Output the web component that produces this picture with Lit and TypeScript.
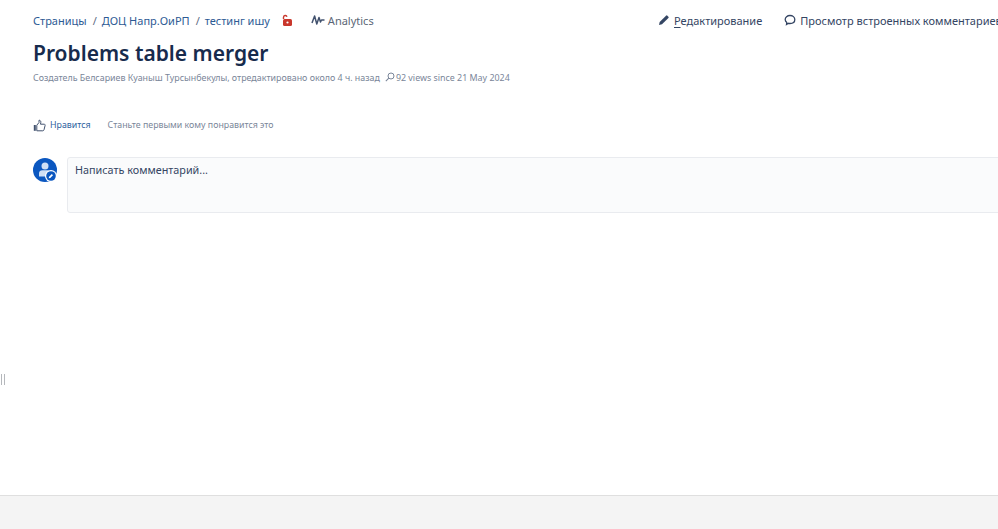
import { LitElement, html, css } from "lit";
import { customElement } from "lit/decorators.js";

@customElement("app-root")
export class AppRoot extends LitElement {
  static styles = css`
    :host {
      display: flex;
      flex-direction: column;
      position: relative;
      width: 998px;
      height: 529px;
      overflow: hidden;
      background: #fff;
      font-family: "Noto Sans", "Open Sans", "Liberation Sans", sans-serif;
      color: #172b4d;
    }
    main { flex: 1; padding: 0 0 0 33px; min-height: 0; }
    .top {
      display: grid;
      grid-template-columns: 625px 1fr;
      height: 40px;
      margin-bottom: 1px;
      align-items: center;
      white-space: nowrap;
      font-size: 11px;
    }
    .left, .right { display: flex; align-items: center; }
    .crumb { color: #2d5a94; }
    .sep { color: #5e6c84; margin: 0 5px 0 6px; }
    .lock { margin: 0 0 0 11px; display: block; }
    .analytics { display: flex; align-items: center; gap: 3px; margin-left: 18px; color: #5b6676; }
    .action { display: flex; align-items: center; gap: 4px; color: #344563; }
    .action + .action { margin-left: 22px; }
    u { text-underline-offset: 2px; text-decoration-thickness: 1px; }
    h1 {
      margin: 0;
      font-size: 21px;
      line-height: 24px;
      font-weight: 600;
      color: #172b4d;
      white-space: nowrap;
    }
    .meta {
      display: flex;
      align-items: center;
      margin-top: 6px;
      height: 12px;
      font-size: 8.9px;
      color: #7a8699;
      white-space: nowrap;
    }
    .views { display: flex; align-items: center; margin-left: 5px; gap: 1px; }
    .like {
      display: flex;
      align-items: center;
      margin-top: 35px;
      height: 14px;
      font-size: 8.8px;
      color: #7a8699;
      white-space: nowrap;
    }
    .like a { color: #2d5f9e; margin: 0 17px 0 4px; }
    .comment { display: flex; gap: 10px; margin-top: 25px; }
    .avatar { flex: none; display: block; margin-top: 1px; }
    .box {
      flex: none;
      width: 960px;
      height: 56px;
      box-sizing: border-box;
      padding: 4px 7px;
      background: #fafbfc;
      border: 1px solid #e9ebef;
      border-radius: 3px;
      font-size: 10.8px;
      line-height: 16px;
      color: #344563;
    }
    footer {
      flex: none;
      height: 33px;
      background: #f4f4f4;
      border-top: 1px solid #dfdfdf;
    }
    .handle {
      position: absolute;
      left: 1px;
      top: 374px;
      width: 2px;
      height: 11px;
      border-left: 1px solid #b5b8bc;
      border-right: 1px solid #b5b8bc;
    }
  `;

  render() {
    return html`
      <main>
        <div class="top">
          <div class="left">
            <span class="crumb">Страницы</span><span class="sep">/</span>
            <span class="crumb">ДОЦ Напр.ОиРП</span><span class="sep">/</span>
            <span class="crumb">тестинг ишу</span>
            <svg class="lock" width="12" height="13" viewBox="0 0 12 13">
              <rect x="2" y="5" width="9" height="7" rx="1.5" fill="#c9372c" />
              <path d="M2.5 5V3.2a1.8 1.8 0 0 1 3.5-.5" fill="none" stroke="#c9372c" stroke-width="1.4" />
              <circle cx="6.5" cy="8.5" r="1.1" fill="#fff" />
            </svg>
            <span class="analytics">
              <svg width="14" height="12" viewBox="0 0 14 12">
                <path d="M1 9 3.600 2l2.200 8 2.200-6.500 1.500 4.500 1-2H13.500" fill="none" stroke="#42526e" stroke-width="1.500" stroke-linejoin="round" />
              </svg>
              Analytics
            </span>
          </div>
          <div class="right">
            <span class="action">
              <svg width="12" height="12" viewBox="0 0 12 12">
                <path d="M1 11l.7-3L8 1.700a1 1 0 0 1 1.400 0l1 1a1 1 0 0 1 0 1.400L4 10.300z" fill="#344563" />
              </svg>
              <span><u>Р</u>едактирование</span>
            </span>
            <span class="action">
              <svg width="12" height="12" viewBox="0 0 12 12">
                <path d="M6 1.500c2.800 0 4.800 1.700 4.800 4s-2 4-4.800 4c-.5 0-1 0-1.400-.2L2.500 10.500l.3-2C1.800 7.700 1.200 6.700 1.200 5.500c0-2.300 2-4 4.800-4z" fill="none" stroke="#344563" stroke-width="1.300" />
              </svg>
              Просмотр встроенных комментариев
            </span>
          </div>
        </div>
        <h1>Problems table merger</h1>
        <div class="meta">
          Создатель Белсариев Куаныш Турсынбекулы, отредактировано около 4 ч. назад
          <span class="views">
            <svg width="10" height="10" viewBox="0 0 10 10">
              <circle cx="6" cy="4" r="3" fill="none" stroke="#7a8699" stroke-width="1" />
              <path d="M3.800 6.200 0.800 9.200" stroke="#7a8699" stroke-width="1.100" />
            </svg>
            92 views since 21 May 2024
          </span>
        </div>
        <div class="like">
          <svg width="13" height="13" viewBox="0 0 13 13">
            <path d="M.800 6h2v5.800h-2z" fill="#42526e" />
            <path d="M3.800 6.200 6 3.500V1.200c1.300 0 2 1 1.800 2.200L7.500 5.200h3.700c.8 0 1.100.7.900 1.300l-1.100 4.300c-.2.600-.6 1-1.200 1H3.800z" fill="none" stroke="#42526e" stroke-width="1" stroke-linejoin="round" />
          </svg>
          <a>Нравится</a>
          Станьте первыми кому понравится это
        </div>
        <div class="comment">
          <svg class="avatar" width="24" height="24" viewBox="0 0 24 24">
            <circle cx="12" cy="12" r="12" fill="#0b57c0" />
            <circle cx="12" cy="8" r="3.500" fill="#cfdff5" />
            <path d="M6 18.500v-3c0-2 1.500-3.200 3.300-3.200h5.400c1.800 0 3.300 1.200 3.300 3.200v3z" fill="#cfdff5" />
            <circle cx="18" cy="18" r="6" fill="#fff" />
            <circle cx="18" cy="18" r="4.800" fill="#0b57c0" />
            <path d="M15.700 20.300l.4-1.600 2.700-2.700 1.200 1.200-2.700 2.700z" fill="#fff" />
          </svg>
          <div class="box">Написать комментарий...</div>
        </div>
      </main>
      <footer></footer>
      <div class="handle"></div>
    `;
  }
}
